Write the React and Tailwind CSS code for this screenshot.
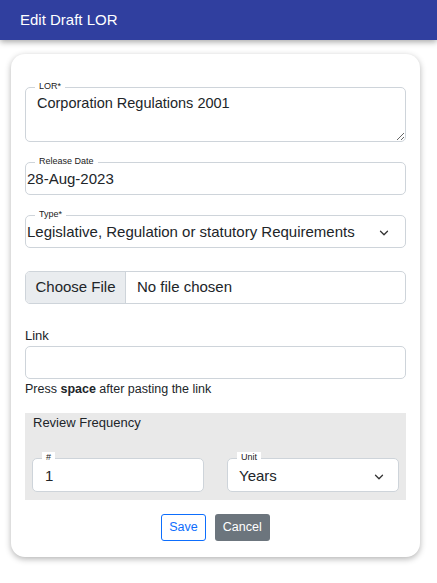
import { ChevronDown } from 'lucide-react';

function Floating({ label, children, className = '' }) {
  return (
    <div className={`relative ${className}`}>
      <span className="absolute left-[10px] -top-[6px] bg-white px-[4px] text-[9px] leading-[11px] text-[#222]">
        {label}
      </span>
      {children}
    </div>
  );
}

export default function App() {
  return (
    <div className="min-h-[583px] bg-white font-['Liberation_Sans',Arial,sans-serif] text-[#212529]">
      {/* Header */}
      <div className="h-10 bg-[#303f9f] flex items-center px-5 shadow-[0_2px_6px_rgba(0,0,0,0.35)] relative z-10">
        <h1 className="text-white text-[15px]">Edit Draft LOR</h1>
      </div>

      {/* Card */}
      <div className="mx-[11px] w-[409px] mt-[14px] bg-white rounded-[14px] shadow-[0_2px_6px_rgba(0,0,0,0.3)] px-[14px] pt-[33px] pb-[16px]">
        <Floating label="LOR*">
          <textarea
            readOnly
            defaultValue="Corporation Regulations 2001"
            className="block w-full h-[55px] border border-[#ced4da] rounded-[5px] px-[11px] pt-[5px] text-[14.5px] leading-[20px] outline-none resize-y"
          />
        </Floating>

        <Floating label="Release Date" className="mt-[20px]">
          <div className="h-[33px] border border-[#ced4da] rounded-[5px] px-[1px] flex items-center text-[15px] pt-[2px]">
            28-Aug-2023
          </div>
        </Floating>

        <Floating label="Type*" className="mt-[20px]">
          <div className="h-[33px] border border-[#ced4da] rounded-[5px] pl-[1px] pr-[14px] flex items-center justify-between text-[15px] pt-[2px]">
            <span>Legislative, Regulation or statutory Requirements</span>
            <ChevronDown size={14} strokeWidth={2.2} className="text-[#333]" />
          </div>
        </Floating>

        <div className="mt-[23px] h-[33px] border border-[#ced4da] rounded-[5px] flex overflow-hidden text-[15px]">
          <div className="w-[100px] bg-[#e9ecef] border-r border-[#ced4da] flex items-center justify-center">
            Choose File
          </div>
          <div className="flex items-center pl-[11px]">No file chosen</div>
        </div>

        <div className="mt-[24px] text-[13px] leading-[16px]">Link</div>
        <div className="mt-[2px] h-[33px] border border-[#ced4da] rounded-[5px]" />
        <div className="mt-[2px] text-[12.5px] leading-[16px]">
          Press <b>space</b> after pasting the link
        </div>

        {/* Review Frequency */}
        <div className="mt-[16px] bg-[#e9e9e9] px-[7px] pt-[2px] pb-[8px]">
          <div className="text-[13px] leading-[16px] pl-[1px]">Review Frequency</div>
          <div className="mt-[27px] flex gap-[23px]">
            <Floating label="#" className="flex-1">
              <div className="h-[34px] bg-white border border-[#ced4da] rounded-[5px] pl-[12px] flex items-center text-[15px] pt-[3px]">
                1
              </div>
            </Floating>
            <Floating label="Unit" className="flex-1">
              <div className="h-[34px] bg-white border border-[#ced4da] rounded-[5px] pl-[11px] pr-[12px] flex items-center justify-between text-[15px] pt-[3px]">
                <span>Years</span>
                <ChevronDown size={14} strokeWidth={2.2} className="text-[#333]" />
              </div>
            </Floating>
          </div>
        </div>

        <div className="mt-[14px] flex justify-center gap-[9px]">
          <button className="h-[27px] px-[7px] border border-[#0d6efd] text-[#0d6efd] rounded-[3px] text-[12.5px] bg-white">
            Save
          </button>
          <button className="h-[27px] px-[8px] bg-[#6c757d] text-white rounded-[3px] text-[12.5px]">
            Cancel
          </button>
        </div>
      </div>
    </div>
  );
}
